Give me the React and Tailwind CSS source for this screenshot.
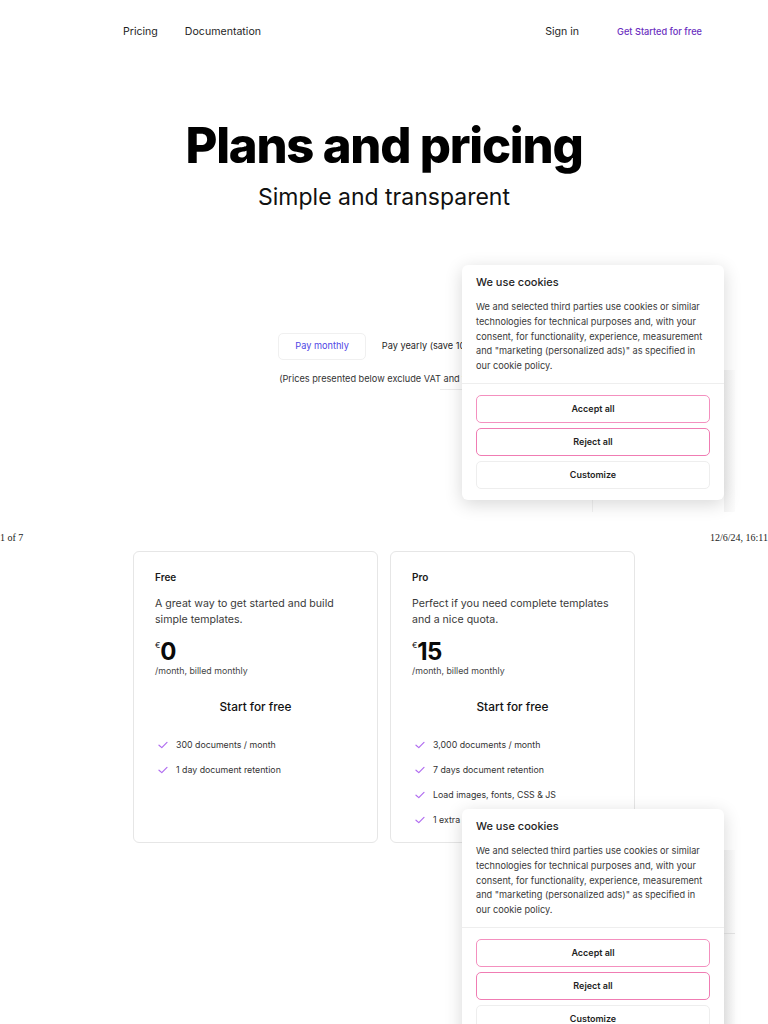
import React from "react";

const font = { fontFamily: "Inter, 'Noto Sans', sans-serif" };

function Check() {
  return (
    <svg width="10" height="8" viewBox="0 0 10 8" className="shrink-0">
      <path d="M1 4.2 L3.8 6.6 L9 1.4" fill="none" stroke="#b06cf0" strokeWidth="1.2" strokeLinecap="round" strokeLinejoin="round" />
    </svg>
  );
}

function CookieBox() {
  return (
    <div className="w-[262px] rounded-[6px] bg-white shadow-[0_4px_18px_rgba(0,0,0,0.16)]">
      <div className="px-[14px] pt-[11px] pb-[9px]">
        <div className="text-[11px] leading-[12px] font-medium text-[#1f1f1f]">We use cookies</div>
        <div className="mt-[12px] text-[9.2px] leading-[14.75px] text-[#3a3a3a] whitespace-nowrap">
          We and selected third parties use cookies or similar<br />
          technologies for technical purposes and, with your<br />
          consent, for functionality, experience, measurement<br />
          and "marketing (personalized ads)" as specified in<br />
          our cookie policy.
        </div>
      </div>
      <div className="border-t border-[#eeeeee] px-[14px] pt-[11px] pb-[11px] flex flex-col gap-[5px]">
        <div className="h-[28px] rounded-[5px] border border-[#f490bf] flex items-center justify-center text-[9px] font-semibold text-[#1f1f1f]">Accept all</div>
        <div className="h-[28px] rounded-[5px] border border-[#f07cb3] flex items-center justify-center text-[9px] font-semibold text-[#1f1f1f]">Reject all</div>
        <div className="h-[28px] rounded-[5px] border border-[#eeeeee] flex items-center justify-center text-[9px] font-semibold text-[#1f1f1f]">Customize</div>
      </div>
    </div>
  );
}

function PlanCard({ name, desc, price, features }) {
  return (
    <div className="w-[245px] h-[292px] rounded-[6px] border border-[#e6e6e6] bg-white px-[21px] pt-[19px]">
      <div className="text-[10px] leading-[12px] font-semibold text-[#1a1a1a]">{name}</div>
      <div className="mt-[13px] text-[10.6px] leading-[16px] text-[#3a3a3a] whitespace-nowrap">
        {desc[0]}<br />{desc[1]}
      </div>
      <div className="mt-[12px] flex items-start h-[24px]">
        <span className="text-[8px] leading-[8px] text-[#111] mt-[1px]">€</span>
        <span className="text-[24px] leading-[24px] font-bold text-[#0a0a0a] tracking-tight">{price}</span>
      </div>
      <div className="mt-[1px] text-[8.8px] leading-[12px] text-[#444]">/month, billed monthly</div>
      <div className="mt-[23px] text-center text-[11.8px] leading-[14px] font-medium text-[#111]">Start for free</div>
      <div className="mt-[18px] flex flex-col">
        {features.map((f) => (
          <div key={f} className="h-[25px] flex items-center gap-[8px] pl-[3px]">
            <Check />
            <span className="text-[8.8px] text-[#333] whitespace-nowrap">{f}</span>
          </div>
        ))}
      </div>
    </div>
  );
}

export default function App() {
  return (
    <div className="w-[768px] h-[1024px] overflow-hidden bg-white" style={font}>
      {/* Page 1 */}
      <div className="relative h-[520px]">
        <nav className="flex items-center justify-between pl-[123px] pr-[66px] pt-[24px] text-[10.6px] text-[#1f1f1f]">
          <div className="flex items-center gap-[27px]">
            <span>Pricing</span>
            <span>Documentation</span>
          </div>
          <div className="flex items-center gap-[38px]">
            <span>Sign in</span>
            <span className="text-[9.2px] font-medium text-[#6b2fc0]">Get Started for free</span>
          </div>
        </nav>
        <h1 className="mt-[78px] text-center text-[49px] leading-[56px] font-extrabold tracking-tight text-black">Plans and pricing</h1>
        <p className="mt-[9px] text-center text-[23px] leading-[28px] text-[#111]">Simple and transparent</p>

        <div className="mt-[122px] flex justify-center">
          <div className="flex items-center gap-[16px] pl-[2px]">
            <div className="h-[27px] px-[16px] rounded-[5px] border border-[#f0f0f0] flex items-center text-[9.2px] text-[#4f46e5]">Pay monthly</div>
            <div className="text-[9.2px] text-[#1f1f1f] pr-[14px]">Pay yearly (save 10%)</div>
          </div>
        </div>
        <p className="mt-[12px] text-center text-[9.2px] text-[#333]">(Prices presented below exclude VAT and taxes)</p>

        {/* shadow artifacts behind cookie box */}
        <div className="absolute left-[440px] top-[389px] w-[295px] border-t border-[#ececec]" />
        <div className="absolute left-[592px] top-[389px] h-[123px] border-l border-[#f2f2f2]" />
        <div className="absolute left-[724px] top-[370px] w-[11px] h-[142px] bg-gradient-to-r from-[#f3f3f3] to-[#fcfcfc]" />

        <div className="absolute left-[462px] top-[265px]">
          <CookieBox />
        </div>
      </div>

      {/* print footer */}
      <div className="h-[30px] flex items-start justify-between text-[10px] leading-[12px] text-[#222]" style={{ fontFamily: "'Liberation Serif', serif" }}>
        <span className="mt-[12px]">1 of 7</span>
        <span className="mt-[12px]">12/6/24, 16:11</span>
      </div>

      {/* Page 2 */}
      <div className="relative h-[474px]">
        <div className="flex gap-[12px] pl-[133px] pt-[1px]">
          <PlanCard
            name="Free"
            desc={["A great way to get started and build", "simple templates."]}
            price="0"
            features={["300 documents / month", "1 day document retention"]}
          />
          <PlanCard
            name="Pro"
            desc={["Perfect if you need complete templates", "and a nice quota."]}
            price="15"
            features={["3,000 documents / month", "7 days document retention", "Load images, fonts, CSS & JS", "1 extra seat"]}
          />
        </div>
        <div className="absolute left-[724px] top-[300px] w-[11px] h-[174px] bg-gradient-to-r from-[#f3f3f3] to-[#fcfcfc]" />
        <div className="absolute left-[724px] top-[383px] w-[11px] border-t border-[#e4e4e4]" />
        <div className="absolute left-[462px] top-[259px]">
          <CookieBox />
        </div>
      </div>
    </div>
  );
}
